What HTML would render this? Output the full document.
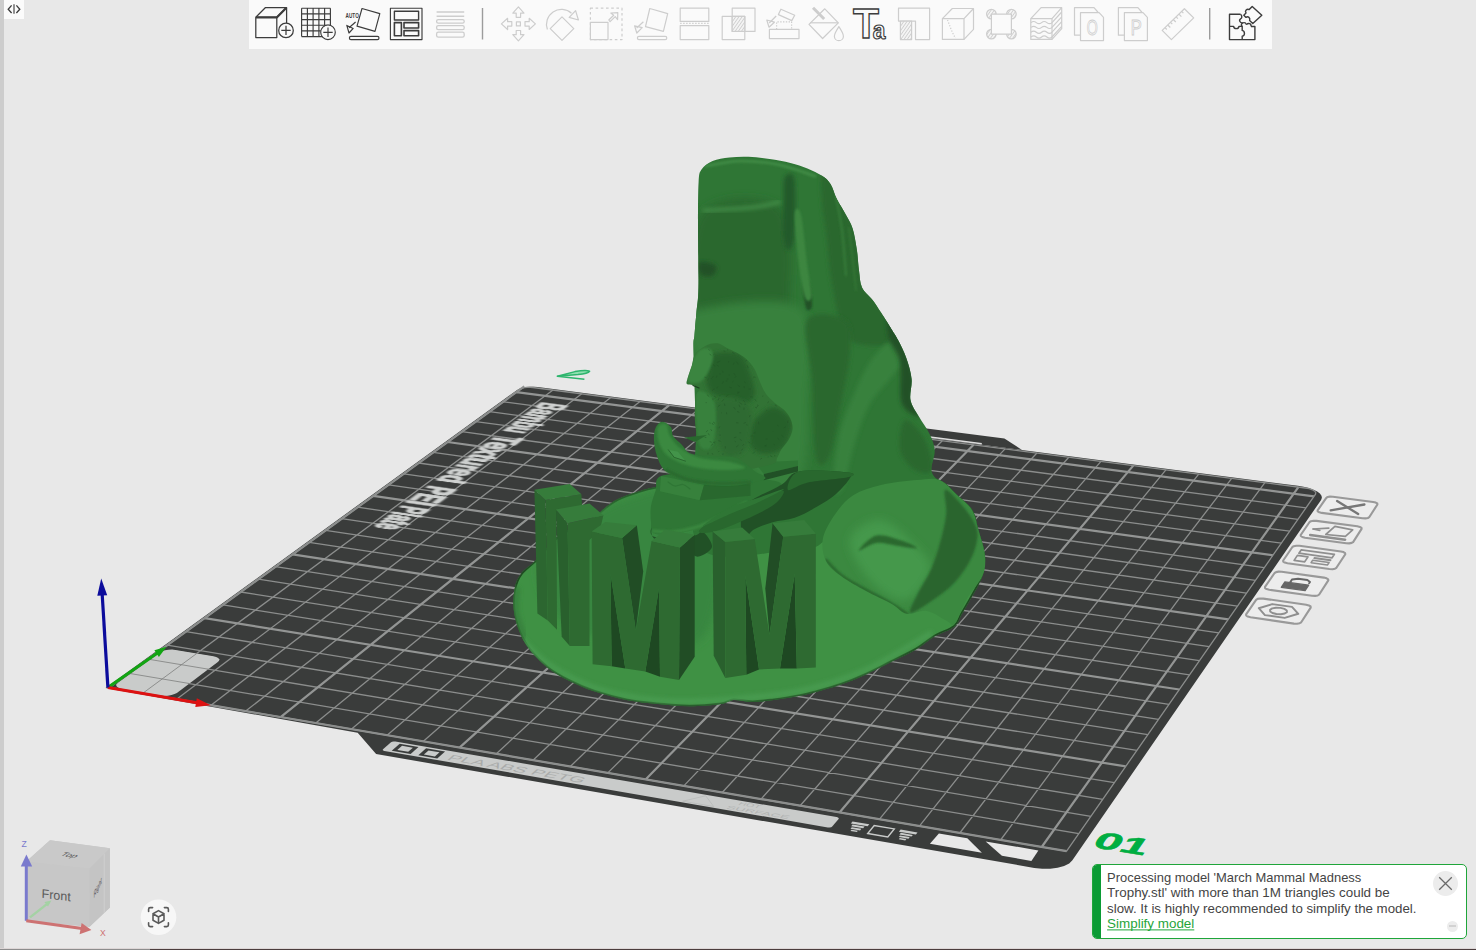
<!DOCTYPE html>
<html><head><meta charset="utf-8"><title>Bambu Studio</title>
<style>
html,body{margin:0;padding:0}
body{width:1476px;height:950px;overflow:hidden;position:relative;background:#e8e8e8;font-family:"Liberation Sans",sans-serif}
svg{position:absolute;left:0;top:0}
</style></head><body>
<svg width="1476" height="950" viewBox="0 0 1476 950">
<g id="plate">
<polygon points="105.5,687.9 357.7,732.8 376.1,754.0 1034.3,867.9 1042.2,868.8 1050.2,868.7 1057.6,867.8 1064.1,865.9 1069.2,863.4 1072.4,860.3 1321.1,499.9 1321.9,497.8 1321.5,495.7 1319.9,493.5 1317.2,491.5 1313.5,489.7 1308.9,488.1 1303.6,486.8 1297.9,485.8 537.9,387.0 534.0,386.7 529.9,386.7 525.9,387.1 522.3,387.8 519.2,388.7 517.1,389.9" fill="#3a3c3b"/>
<polygon points="792.9,420.1 825.7,415.6 1004.4,438.6 1022.0,449.9" fill="#3a3c3b"/>
<path d="M833.3,424.4L981.8,443.7" stroke="#dcdcdc" stroke-width="1.5"/>
<polygon points="383.0,749.2 382.7,749.9 383.2,750.5 384.4,750.9 827.8,827.4 829.6,827.5 831.2,827.2 832.2,826.6 838.6,819.0 838.8,818.2 838.0,817.5 836.6,817.1 395.3,741.5 393.7,741.4 392.1,741.7 391.0,742.3" fill="#c9cbca"/>
<polygon points="938.9,833.4 967.3,838.3 981.9,852.8 929.9,843.8" fill="#e8e8e8"/>
<polygon points="985.7,841.4 1038.4,850.4 1031.4,860.9 1001.9,855.8" fill="#e8e8e8"/>
<polygon points="117.9,682.8 116.5,684.3 116.3,685.7 117.2,687.1 119.2,688.2 122.0,688.9 160.7,695.5 164.2,695.9 167.9,695.7 171.5,695.1 174.5,694.1 176.9,692.9 217.8,662.1 219.1,660.7 219.2,659.3 218.2,658.0 216.2,656.9 213.4,656.2 175.4,649.9 172.1,649.6 168.5,649.8 165.0,650.3 162.0,651.3 159.7,652.5" fill="#c9cbca"/>
<path d="M142.5,693.5L553.0,390.1M128.6,673.3L1078.9,833.6M176.6,699.3L581.8,393.8M148.1,659.1L1090.9,816.3M211.0,705.2L610.8,397.6M167.3,645.2L1102.8,799.3M245.7,711.1L640.0,401.4M186.1,631.6L1114.4,782.7M315.8,723.1L698.9,409.1M222.9,604.9L1136.9,750.4M351.3,729.2L728.7,412.9M240.7,592.0L1147.8,734.7M387.1,735.3L758.6,416.8M258.3,579.2L1158.5,719.4M423.1,741.4L788.7,420.8M275.5,566.7L1169.0,704.3M496.1,753.9L849.6,428.7M309.2,542.3L1189.5,674.9M533.0,760.2L880.3,432.7M325.6,530.4L1199.4,660.7M570.3,766.5L911.2,436.7M341.7,518.7L1209.2,646.7M607.8,772.9L942.3,440.7M357.6,507.2L1218.8,632.9M683.8,785.9L1005.1,448.9M388.6,484.8L1237.4,606.1M722.2,792.5L1036.9,453.0M403.7,473.8L1246.5,593.1M761.0,799.1L1068.8,457.2M418.6,463.0L1255.5,580.3M800.1,805.8L1101.0,461.4M433.2,452.4L1264.2,567.7M879.3,819.3L1165.9,469.8M461.8,431.7L1281.4,543.1M919.4,826.1L1198.7,474.1M475.8,421.6L1289.7,531.2M959.8,833.0L1231.7,478.4M489.5,411.6L1297.9,519.4M1000.6,840.0L1264.9,482.7M503.1,401.8L1306.0,507.8" stroke="#8b8d8c" stroke-width="1.3" fill="none"/>
<path d="M108.7,687.7L524.3,386.4M108.7,687.7L1066.6,851.2M280.6,717.1L669.3,405.2M204.7,618.1L1125.7,766.4M459.5,747.6L819.0,424.7M292.5,554.4L1179.3,689.5M645.6,779.4L973.6,444.8M373.2,495.9L1228.2,619.4M839.5,812.5L1133.3,465.6M447.6,442.0L1272.9,555.3M1041.7,847.0L1298.4,487.1M516.4,392.1L1313.9,496.4" stroke="#939594" stroke-width="2.2" fill="none"/>
<polygon points="108.7,687.7 108.7,687.7 108.7,687.7 108.7,687.7 108.7,687.7 108.7,687.7 1066.5,851.2 1066.5,851.2 1066.6,851.2 1066.6,851.2 1066.6,851.2 1066.6,851.2 1315.5,494.2 1315.8,492.7 1314.7,491.2 1312.4,489.8 1309.1,488.7 1305.1,488.0 532.9,387.5 530.1,387.3 527.1,387.4 524.3,387.7 522.0,388.4 520.4,389.2" stroke="#8b8d8c" stroke-width="1.3" fill="none"/>
<polygon points="119.5,682.6 118.1,684.0 117.9,685.5 118.8,686.8 120.8,687.9 123.6,688.7 160.3,694.9 163.8,695.2 167.4,695.1 171.0,694.5 174.1,693.5 176.4,692.3 216.3,662.4 217.5,661.0 217.6,659.6 216.7,658.3 214.7,657.2 211.8,656.5 175.8,650.5 172.5,650.2 168.9,650.4 165.4,650.9 162.4,651.8 160.2,653.1" fill="#c9cbca"/>
<path d="M143.7,692.6L196.7,653.5M130.6,673.6L189.3,683.5M150.1,659.5L208.4,669.2" stroke="#7d7f7e" stroke-width="0.8" fill="none"/>
</g>
<g id="model">
<defs><filter id="b2" x="-20%" y="-20%" width="140%" height="140%"><feGaussianBlur stdDeviation="2"/></filter><filter id="b4" x="-20%" y="-20%" width="140%" height="140%"><feGaussianBlur stdDeviation="4"/></filter><filter id="b1" x="-20%" y="-20%" width="140%" height="140%"><feGaussianBlur stdDeviation="1"/></filter></defs>
<clipPath id="cbase"><path d="M536.0,560.0C529.5,566.5 524.5,569.0 521.0,573.7C517.5,578.4 515.9,582.4 514.7,588.4C513.5,594.4 513.0,602.5 513.7,609.5C514.4,616.5 516.4,623.8 519.0,630.5C521.6,637.2 524.6,643.2 529.5,649.5C534.4,655.8 541.7,663.1 548.4,668.4C555.1,673.6 561.8,677.1 569.5,681.0C577.2,684.9 585.2,688.4 594.7,691.6C604.2,694.8 615.8,697.9 626.3,700.0C636.8,702.1 647.5,703.0 658.0,704.0C668.5,705.0 679.0,706.3 689.5,706.3C700.0,706.3 713.6,705.0 721.0,704.0C728.4,703.0 728.4,700.3 733.7,700.0C739.0,699.7 745.9,702.0 752.6,702.0C759.3,702.0 765.8,701.0 773.7,700.0C781.6,699.0 793.0,697.1 800.0,695.8C807.0,694.5 809.0,693.9 815.8,692.0C822.6,690.1 832.6,687.4 841.0,684.5C849.4,681.6 857.6,678.2 866.0,674.4C874.4,670.6 883.0,666.0 891.5,661.8C900.0,657.6 909.6,653.2 916.8,649.0C923.9,644.8 928.1,640.4 934.4,636.6C940.7,632.9 950.0,630.3 954.6,626.5C959.2,622.7 959.0,618.9 962.0,613.8C965.0,608.7 968.9,602.3 972.3,596.0C975.7,589.7 980.3,582.7 982.4,576.0C984.5,569.3 985.6,563.4 985.0,555.8C984.4,548.2 980.7,538.1 978.6,530.5C976.5,522.9 975.9,515.9 972.3,510.0C968.7,504.1 962.5,500.0 957.0,495.0C951.5,490.0 949.0,484.2 939.5,480.0C930.0,475.8 923.2,471.7 900.0,470.0C876.8,468.3 833.3,468.3 800.0,470.0C766.7,471.7 724.0,477.2 700.0,480.0C676.0,482.8 666.5,485.0 656.0,487.0C645.5,489.0 643.3,490.0 637.0,492.0C630.7,494.0 623.2,496.5 618.0,499.0C612.8,501.5 610.7,503.5 606.0,507.0C601.3,510.5 597.7,515.3 590.0,520.0C582.3,524.7 569.0,528.3 560.0,535.0C551.0,541.7 542.5,553.5 536.0,560.0Z"/></clipPath>
<g clip-path="url(#cbase)">
<polygon points="500.0,450.0 1000.0,450.0 1000.0,720.0 500.0,720.0" fill="#3f9144" />
<path d="M536.0,560.0C533.5,562.3 524.5,569.0 521.0,573.7C517.5,578.4 515.9,582.4 514.7,588.4C513.5,594.4 513.0,602.5 513.7,609.5C514.4,616.5 516.4,623.8 519.0,630.5C521.6,637.2 524.6,643.2 529.5,649.5C534.4,655.8 541.7,663.1 548.4,668.4C555.1,673.6 561.8,677.1 569.5,681.0C577.2,684.9 585.2,688.4 594.7,691.6C604.2,694.8 615.8,697.9 626.3,700.0C636.8,702.1 647.5,703.0 658.0,704.0C668.5,705.0 679.0,706.3 689.5,706.3C700.0,706.3 713.6,705.0 721.0,704.0C728.4,703.0 728.4,700.3 733.7,700.0C739.0,699.7 745.9,702.0 752.6,702.0C759.3,702.0 765.8,701.0 773.7,700.0C781.6,699.0 793.0,697.1 800.0,695.8C807.0,694.5 809.0,693.9 815.8,692.0C822.6,690.1 832.6,687.4 841.0,684.5C849.4,681.6 857.6,678.2 866.0,674.4C874.4,670.6 883.0,666.0 891.5,661.8C900.0,657.6 909.6,653.2 916.8,649.0C923.9,644.8 928.1,640.4 934.4,636.6C940.7,632.9 950.0,630.3 954.6,626.5C959.2,622.7 959.0,618.9 962.0,613.8C965.0,608.7 968.9,602.3 972.3,596.0C975.7,589.7 980.3,582.7 982.4,576.0C984.5,569.3 985.6,563.4 985.0,555.8C984.4,548.2 980.7,538.1 978.6,530.5C976.5,522.9 975.9,515.9 972.3,510.0C968.7,504.1 962.5,500.0 957.0,495.0C951.5,490.0 949.0,484.2 939.5,480.0C930.0,475.8 923.2,471.7 900.0,470.0C876.8,468.3 833.3,468.3 800.0,470.0C766.7,471.7 724.0,477.2 700.0,480.0C676.0,482.8 666.5,485.0 656.0,487.0C645.5,489.0 643.3,490.0 637.0,492.0C630.7,494.0 623.2,496.5 618.0,499.0C612.8,501.5 610.7,503.5 606.0,507.0C601.3,510.5 597.7,515.3 590.0,520.0C582.3,524.7 569.0,528.3 560.0,535.0C551.0,541.7 540.0,555.8 536.0,560.0" fill="none" stroke="#1f4a22" stroke-width="3.2" stroke-linecap="round" stroke-linejoin="round" />
<path d="M522.0,640.0C526.3,644.0 535.8,656.0 548.0,664.0C560.2,672.0 576.7,681.9 595.0,688.0C613.3,694.1 637.0,698.5 658.0,700.5C679.0,702.5 697.3,701.6 721.0,700.0C744.7,698.4 775.8,696.0 800.0,691.0C824.2,686.0 844.3,679.5 866.0,670.0C887.7,660.5 919.3,640.0 930.0,634.0" fill="none" stroke="#4a9c51" stroke-width="5" stroke-linecap="round" stroke-linejoin="round"  filter="url(#b2)"/>
<path d="M517.0,590.0C516.8,593.7 514.8,604.3 516.0,612.0C517.2,619.7 522.7,632.0 524.0,636.0" fill="none" stroke="#37813c" stroke-width="6" stroke-linecap="round" stroke-linejoin="round"  filter="url(#b2)"/>
<path d="M540.0,560.0C546.7,541.7 580.0,522.0 600.0,510.0C620.0,498.0 643.3,493.0 660.0,488.0C676.7,483.0 690.0,468.0 700.0,480.0C710.0,492.0 720.0,533.3 720.0,560.0C720.0,586.7 716.7,626.7 700.0,640.0C683.3,653.3 643.3,643.3 620.0,640.0C596.7,636.7 573.3,633.3 560.0,620.0C546.7,606.7 533.3,578.3 540.0,560.0Z" fill="#398640"  filter="url(#b4)"/>
</g>
<clipPath id="crock"><path d="M693.5,352.0C693.2,336.2 694.0,341.7 694.5,335.0C695.0,328.3 695.8,320.0 696.5,312.0C697.2,304.0 698.2,301.7 698.5,287.0C698.8,272.3 698.0,241.5 698.0,224.0C698.0,206.5 698.0,191.1 698.6,182.0C699.2,172.9 699.2,173.0 701.5,169.5C703.8,166.0 707.9,163.0 712.6,161.0C717.3,159.0 723.5,158.2 729.5,157.5C735.5,156.8 741.7,156.6 748.4,156.8C755.1,157.1 762.5,158.0 769.5,159.0C776.5,160.0 784.2,161.4 790.5,163.0C796.8,164.6 802.1,166.3 807.4,168.4C812.6,170.5 818.1,173.2 822.0,175.8C825.9,178.4 828.0,180.1 830.5,184.0C833.0,187.9 834.3,194.1 836.8,199.0C839.3,203.9 842.7,208.8 845.3,213.7C847.9,218.6 850.7,222.4 852.6,228.4C854.5,234.4 855.7,242.5 856.8,249.5C857.9,256.5 858.1,264.2 859.0,270.5C859.9,276.8 859.7,282.5 862.0,287.4C864.3,292.3 869.4,295.8 872.6,300.0C875.8,304.2 877.8,307.7 881.0,312.6C884.2,317.5 888.8,324.9 891.6,329.5C894.4,334.1 895.5,335.3 898.0,340.0C900.5,344.7 904.0,351.4 906.3,357.9C908.6,364.4 910.9,372.0 911.6,379.0C912.3,386.0 909.3,393.7 910.5,400.0C911.7,406.3 915.8,411.2 919.0,416.8C922.2,422.4 926.9,428.1 929.5,433.7C932.1,439.3 934.4,444.2 934.7,450.5C935.1,456.8 930.4,466.0 931.6,471.6C932.8,477.2 938.9,480.6 942.0,484.0C945.1,487.4 952.0,489.3 950.0,492.0C948.0,494.7 941.7,498.7 930.0,500.0C918.3,501.3 895.0,496.7 880.0,500.0C865.0,503.3 849.5,513.0 840.0,520.0C830.5,527.0 829.7,537.3 823.0,542.0C816.3,546.7 820.5,547.0 800.0,548.0C779.5,549.0 717.3,567.7 700.0,548.0C682.7,528.3 697.1,462.7 696.0,430.0C694.9,397.3 693.8,367.8 693.5,352.0Z"/></clipPath>
<g clip-path="url(#crock)">
<polygon points="680.0,140.0 1000.0,140.0 1000.0,620.0 680.0,620.0" fill="#2f7635" />
<path d="M700.0,215.0C713.3,194.7 765.0,193.8 780.0,208.0C795.0,222.2 790.0,279.7 790.0,300.0C790.0,320.3 795.0,325.0 780.0,330.0C765.0,335.0 713.3,349.2 700.0,330.0C686.7,310.8 686.7,235.3 700.0,215.0Z" fill="#29682e"  filter="url(#b4)"/>
<path d="M700.0,262.0C702.7,260.7 714.0,263.7 716.0,266.0C718.0,268.3 714.7,274.7 712.0,276.0C709.3,277.3 702.0,276.3 700.0,274.0C698.0,271.7 697.3,263.3 700.0,262.0Z" fill="#215126"  filter="url(#b2)"/>
<path d="M690.0,312.0C708.3,305.8 780.3,293.3 800.0,308.0C819.7,322.7 808.0,371.3 808.0,400.0C808.0,428.7 808.0,466.7 800.0,480.0C792.0,493.3 778.3,502.5 760.0,480.0C741.7,457.5 701.7,373.0 690.0,345.0C678.3,317.0 671.7,318.2 690.0,312.0Z" fill="#37813c"  filter="url(#b4)"/>
<path d="M822.0,170.0C824.2,166.8 832.0,179.4 835.0,184.2C838.0,189.0 837.8,194.1 840.0,199.0C842.2,203.9 845.5,208.8 848.0,213.7C850.5,218.6 853.0,222.4 855.0,228.4C857.0,234.4 858.8,242.5 860.0,249.5C861.2,256.5 861.2,264.2 862.0,270.5C862.8,276.8 862.8,282.5 865.0,287.4C867.2,292.3 868.8,291.2 875.0,300.0C881.2,308.8 906.2,333.3 902.0,340.0C897.8,346.7 861.1,348.8 849.5,340.0C837.9,331.2 836.5,304.9 832.6,287.4C828.7,269.8 828.1,248.7 826.3,234.7C824.5,220.7 822.7,214.0 822.0,203.2C821.3,192.4 819.8,173.2 822.0,170.0Z" fill="#29682e"  filter="url(#b2)"/>
<path d="M784.5,177.9C786.2,173.3 791.7,171.6 793.5,175.8C795.3,180.0 795.5,192.3 795.5,203.2C795.5,214.1 794.9,233.3 793.5,241.0C792.1,248.7 788.8,250.9 787.0,249.5C785.2,248.1 783.6,240.3 783.0,232.6C782.4,224.9 783.2,212.3 783.5,203.2C783.8,194.1 782.8,182.5 784.5,177.9Z" fill="#245a29"  filter="url(#b2)"/>
<path d="M803.0,280.0C803.5,275.8 807.5,278.7 809.0,283.0C810.5,287.3 812.5,301.8 812.0,306.0C811.5,310.2 807.5,312.3 806.0,308.0C804.5,303.7 802.5,284.2 803.0,280.0Z" fill="#215126"  filter="url(#b1)"/>
<path d="M794.7,215.0C795.0,206.4 798.9,206.4 801.0,215.0C803.1,223.6 805.6,252.8 807.4,266.3C809.2,279.8 812.0,290.7 811.6,296.0C811.2,301.3 807.4,302.9 805.3,298.0C803.2,293.1 800.8,280.1 799.0,266.3C797.2,252.5 794.4,223.6 794.7,215.0Z" fill="#3c8641"  filter="url(#b1)"/>
<path d="M704.0,210.5C710.0,210.2 730.3,209.2 740.0,208.5C749.7,207.8 755.5,207.1 762.0,206.0C768.5,204.9 776.2,202.7 779.0,202.0" fill="none" stroke="#44904a" stroke-width="3.4" stroke-linecap="round" stroke-linejoin="round"  filter="url(#b2)"/>
<path d="M706.0,166.0C711.7,165.2 728.0,161.2 740.0,161.0C752.0,160.8 765.5,162.0 778.0,164.5C790.5,167.0 808.8,174.1 815.0,176.0" fill="none" stroke="#3f8a44" stroke-width="3" stroke-linecap="round" stroke-linejoin="round"  filter="url(#b1)"/>
<path d="M836.0,196.0C837.0,201.7 840.3,216.8 842.0,230.0C843.7,243.2 845.3,267.5 846.0,275.0" fill="none" stroke="#357838" stroke-width="2.5" stroke-linecap="round" stroke-linejoin="round"  filter="url(#b1)"/>
<path d="M849.0,228.0C849.7,233.7 851.8,251.7 853.0,262.0C854.2,272.3 855.5,285.3 856.0,290.0" fill="none" stroke="#337436" stroke-width="2" stroke-linecap="round" stroke-linejoin="round"  filter="url(#b1)"/>
<path d="M807.0,320.0C812.5,310.2 837.8,314.7 845.0,320.0C852.2,325.3 850.7,338.0 850.0,352.0C849.3,366.0 844.5,386.5 841.0,404.0C837.5,421.5 833.2,448.2 829.0,457.0C824.8,465.8 818.8,470.0 816.0,457.0C813.2,444.0 813.5,401.8 812.0,379.0C810.5,356.2 801.5,329.8 807.0,320.0Z" fill="#29682e"  filter="url(#b2)"/>
<path d="M870.0,362.0C876.3,353.2 886.7,341.0 892.0,341.0C897.3,341.0 905.7,351.5 902.0,362.0C898.3,372.5 878.0,390.0 870.0,404.0C862.0,418.0 858.5,432.0 854.0,446.0C849.5,460.0 846.5,481.0 843.0,488.0C839.5,495.0 833.7,496.7 833.0,488.0C832.3,479.3 835.5,451.7 839.0,436.0C842.5,420.3 848.8,406.3 854.0,394.0C859.2,381.7 863.7,370.8 870.0,362.0Z" fill="#37813c"  filter="url(#b2)"/>
<path d="M888.0,318.0C889.8,317.7 896.5,330.3 900.0,337.0C903.5,343.7 906.7,351.0 909.0,358.0C911.3,365.0 913.3,372.0 914.0,379.0C914.7,386.0 911.8,393.7 913.0,400.0C914.2,406.3 922.8,416.3 921.0,417.0C919.2,417.7 905.5,413.2 902.0,404.0C898.5,394.8 902.2,372.8 900.0,362.0C897.8,351.2 891.0,346.3 889.0,339.0C887.0,331.7 886.2,318.3 888.0,318.0Z" fill="#215126"  filter="url(#b2)"/>
<path d="M905.0,420.0C909.2,418.3 920.5,431.7 925.0,440.0C929.5,448.3 933.7,465.0 932.0,470.0C930.3,475.0 920.3,473.3 915.0,470.0C909.7,466.7 901.7,458.3 900.0,450.0C898.3,441.7 900.8,421.7 905.0,420.0Z" fill="#29682e"  filter="url(#b2)"/>
</g>
<clipPath id="cboul"><path d="M823.0,538.0C824.7,530.0 830.9,520.2 836.0,513.0C841.1,505.8 846.1,499.7 853.6,495.0C861.1,490.3 870.4,487.5 881.0,485.0C891.6,482.5 907.2,480.8 917.0,480.0C926.8,479.2 932.8,477.5 939.5,480.0C946.2,482.5 951.6,490.0 957.0,495.0C962.4,500.0 968.4,504.1 972.0,510.0C975.6,515.9 976.4,522.8 978.6,530.5C980.8,538.2 984.4,548.4 985.0,556.0C985.6,563.6 985.4,568.9 982.4,576.0C979.4,583.1 971.6,590.7 967.0,598.7C962.4,606.7 957.9,620.3 954.6,624.0C951.3,627.7 951.6,623.2 947.0,621.0C942.4,618.8 933.7,612.2 927.0,611.0C920.3,609.8 912.6,615.0 906.7,613.8C900.8,612.6 898.3,607.5 891.5,603.7C884.7,599.9 874.4,595.6 866.0,591.0C857.6,586.4 847.7,581.0 841.0,576.0C834.3,571.0 829.0,567.3 826.0,561.0C823.0,554.7 821.3,546.0 823.0,538.0Z"/></clipPath>
<g clip-path="url(#cboul)">
<polygon points="800.0,470.0 1000.0,470.0 1000.0,640.0 800.0,640.0" fill="#3b8940" />
<path d="M850.0,540.0C851.7,530.0 869.2,519.2 880.0,520.0C890.8,520.8 906.7,536.7 915.0,545.0C923.3,553.3 931.7,560.8 930.0,570.0C928.3,579.2 915.0,598.3 905.0,600.0C895.0,601.7 879.2,590.0 870.0,580.0C860.8,570.0 848.3,550.0 850.0,540.0Z" fill="#45984c"  filter="url(#b4)"/>
<path d="M945.0,490.0C947.1,488.1 954.4,496.7 959.0,501.7C963.6,506.7 969.8,514.4 972.9,520.2C976.0,526.0 977.9,529.8 977.5,536.4C977.1,543.0 974.5,551.9 970.6,559.6C966.8,567.3 961.0,575.8 954.4,582.8C947.8,589.8 938.6,596.3 931.2,601.3C923.9,606.3 912.6,614.0 910.3,612.9C908.0,611.8 913.8,601.7 917.3,594.4C920.8,587.1 927.3,577.8 931.2,568.9C935.1,560.0 938.0,550.3 940.5,541.0C943.0,531.7 945.5,521.8 946.2,513.3C947.0,504.8 942.9,491.9 945.0,490.0Z" fill="#2a652e"  filter="url(#b1)"/>
<path d="M858.7,550.7C858.7,549.5 869.2,537.3 876.4,535.6C883.5,533.9 894.9,538.5 901.6,540.6C908.3,542.7 917.6,547.4 916.8,548.2C916.0,549.1 903.3,546.6 896.6,545.7C889.9,544.8 882.7,542.2 876.4,543.0C870.1,543.8 858.7,551.9 858.7,550.7Z" fill="#29682e"  filter="url(#b1)"/>
<path d="M826.0,560.0C829.2,563.0 834.3,570.8 845.0,578.0C855.7,585.2 879.7,597.0 890.0,603.0C900.3,609.0 904.2,612.2 907.0,614.0" fill="none" stroke="#29682e" stroke-width="3" stroke-linecap="round" stroke-linejoin="round"  filter="url(#b1)"/>
</g>
<path d="M655.5,491.0C653.8,496.0 651.8,500.8 651.0,506.0C650.2,511.2 650.6,517.8 651.0,522.3C651.4,526.8 649.8,531.3 653.3,533.3C656.8,535.2 665.0,534.6 672.0,534.0C679.0,533.4 688.4,531.5 695.2,529.5C702.0,527.5 704.4,526.4 712.9,522.3C721.4,518.1 734.7,510.9 746.1,504.6C757.5,498.3 780.4,489.1 781.4,484.7C782.4,480.3 765.6,479.8 752.0,478.0C738.4,476.2 715.2,474.3 700.0,474.0C684.8,473.7 668.4,473.2 661.0,476.0C653.6,478.8 657.2,486.0 655.5,491.0Z" fill="#2f7635" />
<path d="M653.0,531.0C656.2,531.2 665.0,532.6 672.0,532.0C679.0,531.4 688.4,529.5 695.2,527.5C702.0,525.5 704.4,524.4 712.9,520.3C721.4,516.1 740.6,505.6 746.1,502.6" fill="none" stroke="#3b8940" stroke-width="3" stroke-linecap="round" stroke-linejoin="round"  filter="url(#b1)"/>
<path d="M651.5,528.0C651.3,527.6 648.1,535.7 655.0,537.0C661.9,538.3 684.6,536.8 692.6,536.0C700.6,535.2 699.8,530.2 703.0,532.0C706.2,533.8 712.7,542.9 712.0,547.0C711.3,551.1 702.5,555.7 699.0,556.5C695.5,557.3 692.5,554.6 691.0,552.0C689.5,549.4 695.8,543.1 690.0,541.0C684.2,538.9 662.4,541.7 656.0,539.5C649.6,537.3 651.7,528.4 651.5,528.0Z" fill="#215126" />
<path d="M746.1,504.6C752.8,497.4 772.6,490.2 781.4,484.7C790.2,479.2 788.0,473.4 799.1,471.4C810.2,469.4 839.5,471.4 848.0,472.5C856.5,473.6 852.0,474.4 850.0,478.0C848.0,481.6 841.5,489.2 836.0,494.0C830.5,498.8 823.7,502.8 816.8,506.8C809.9,510.8 802.1,515.2 794.7,517.8C787.3,520.4 779.2,520.4 772.6,522.3C766.0,524.1 759.2,526.8 754.9,528.9C750.6,531.0 749.3,535.1 747.0,535.0C744.7,534.9 741.1,533.1 741.0,528.0C740.9,522.9 739.4,511.8 746.1,504.6Z" fill="#215126" />
<path d="M799.1,471.4C809.1,468.5 839.7,471.6 848.0,472.5C856.3,473.4 855.7,475.3 849.0,477.0C842.3,478.7 818.2,480.3 808.0,482.5C797.8,484.7 789.5,491.9 788.0,490.0C786.5,488.1 789.1,474.3 799.1,471.4Z" fill="#29682e" />
<path d="M701.0,528.4C705.2,524.5 718.9,514.4 728.4,509.5C737.9,504.6 748.8,502.2 757.9,499.0C767.0,495.8 780.0,489.8 783.0,490.5C786.0,491.2 780.9,498.8 776.0,503.0C771.1,507.2 762.4,511.6 753.7,515.8C745.0,520.0 732.5,525.5 724.0,528.4C715.5,531.3 706.8,533.0 703.0,533.0C699.2,533.0 696.8,532.3 701.0,528.4Z" fill="#29682e" />
<path d="M703.0,526.0C702.7,525.1 719.2,513.2 728.4,508.5C737.5,503.8 748.6,501.2 757.9,498.0C767.2,494.8 783.6,488.4 784.0,489.0C784.4,489.6 769.0,497.3 760.0,501.5C751.0,505.7 739.5,509.9 730.0,514.0C720.5,518.1 703.3,526.9 703.0,526.0Z" fill="#2f7635" />
<polygon points="661.0,475.9 704.0,470.0 750.5,480.0 750.5,495.7 699.7,500.2 659.9,491.3" fill="#2f7635" />
<polygon points="661.0,475.9 704.1,484.7 699.7,500.2 659.9,491.3" fill="#37813c" />
<polygon points="704.1,484.7 750.5,482.5 750.5,495.7 699.7,500.2" fill="#29682e" />
<path d="M668.0,482.0C669.2,482.7 672.5,485.6 675.0,486.0C677.5,486.4 680.5,484.0 683.0,484.5C685.5,485.0 688.8,488.2 690.0,489.0" fill="none" stroke="#2f7635" stroke-width="1.2" stroke-linecap="round" stroke-linejoin="round" />
<polygon points="754.9,462.6 798.0,460.4 798.0,466.0 763.8,474.0" fill="#2f7635" />
<polygon points="763.8,474.0 798.0,466.0 798.0,471.4 763.8,480.3" fill="#215126" />
<clipPath id="cbear"><path d="M695.2,354.3C697.6,351.0 702.6,347.3 706.3,345.5C710.0,343.7 713.6,342.8 717.3,343.3C721.0,343.9 724.7,347.0 728.4,348.8C732.1,350.6 736.1,352.3 739.4,354.3C742.7,356.3 745.7,358.3 748.3,360.9C750.9,363.5 752.9,366.1 754.9,369.8C756.9,373.5 758.5,378.9 760.4,383.0C762.2,387.1 763.6,390.8 766.0,394.1C768.4,397.4 771.9,400.3 774.8,402.9C777.7,405.5 781.0,407.0 783.6,409.6C786.2,412.2 788.8,415.1 790.3,418.4C791.8,421.7 792.9,425.7 792.5,429.4C792.1,433.1 790.0,437.2 788.1,440.5C786.2,443.8 783.2,446.4 781.4,449.3C779.5,452.2 778.5,455.8 777.0,458.2C775.5,460.6 778.8,462.0 772.6,464.0C766.4,466.0 751.3,469.7 740.0,470.0C728.7,470.3 712.0,469.8 705.0,466.0C698.0,462.2 699.3,452.5 697.9,447.1C696.5,441.8 696.9,438.7 696.4,433.9C695.9,429.1 695.0,423.6 694.8,418.4C694.6,413.2 694.9,406.9 695.2,402.9C695.5,398.8 695.6,396.5 696.4,394.1C697.1,391.7 700.3,390.1 699.7,388.6C699.1,387.1 695.1,385.9 693.0,385.2C690.9,384.4 687.8,385.2 686.9,384.1C686.0,383.0 686.7,381.7 687.5,378.6C688.3,375.5 690.6,369.4 691.9,365.4C693.2,361.3 692.8,357.6 695.2,354.3Z"/></clipPath><g clip-path="url(#cbear)">
<polygon points="680.0,340.0 800.0,340.0 800.0,475.0 680.0,475.0" fill="#327335" />
<path d="M712.9,354.3C718.0,351.7 733.1,351.0 739.4,354.3C745.7,357.6 747.9,367.6 750.5,374.2C753.1,380.8 755.6,389.3 754.9,394.1C754.2,398.9 750.5,402.2 746.1,402.9C741.7,403.6 733.9,400.0 728.4,398.5C722.9,397.0 716.6,396.7 712.9,394.1C709.2,391.5 707.0,387.1 706.3,383.0C705.6,378.9 707.4,374.6 708.5,369.8C709.6,365.0 707.8,356.9 712.9,354.3Z" fill="#27602b"  filter="url(#b2)"/>
<path d="M752.7,422.8C756.4,416.5 766.3,408.0 772.6,407.3C778.9,406.6 787.3,414.0 790.3,418.4C793.2,422.8 791.8,428.8 790.3,433.9C788.8,439.0 785.8,446.0 781.4,449.3C777.0,452.6 768.9,454.5 763.8,453.8C758.6,453.1 752.4,450.1 750.5,444.9C748.6,439.7 749.0,429.1 752.7,422.8Z" fill="#27602b"  filter="url(#b2)"/>
<path d="M718.0,400.0C722.8,395.3 739.3,398.7 745.0,402.0C750.7,405.3 752.0,412.0 752.0,420.0C752.0,428.0 749.5,444.2 745.0,450.0C740.5,455.8 729.8,458.3 725.0,455.0C720.2,451.7 717.2,439.2 716.0,430.0C714.8,420.8 713.2,404.7 718.0,400.0Z" fill="#2e6b31"  filter="url(#b2)"/>
<path d="M697.0,392.0C699.7,388.7 708.8,393.7 712.0,398.0C715.2,402.3 716.0,410.0 716.0,418.0C716.0,426.0 714.7,441.3 712.0,446.0C709.3,450.7 702.7,450.7 700.0,446.0C697.3,441.3 696.5,427.0 696.0,418.0C695.5,409.0 694.3,395.3 697.0,392.0Z" fill="#37813c"  filter="url(#b1)"/>
<path d="M692.0,362.0C694.0,356.8 697.0,352.2 700.0,350.0C703.0,347.8 707.8,347.7 710.0,349.0C712.2,350.3 713.3,354.2 713.0,358.0C712.7,361.8 710.2,368.0 708.0,372.0C705.8,376.0 703.3,380.5 700.0,382.0C696.7,383.5 689.3,384.3 688.0,381.0C686.7,377.7 690.0,367.2 692.0,362.0Z" fill="#3a8540"  filter="url(#b1)"/>
<path d="M733.2,364.9l0.8,-2.1M751.0,389.0l-2.2,0.0M709.1,396.6l-2.2,-2.0M741.7,440.6l-1.9,-1.4M758.7,454.1l0.4,-0.5M788.0,353.2l1.8,-1.1M718.1,361.2l-1.0,1.6M721.2,413.1l0.7,-0.6M752.0,355.0l-2.2,-1.5M763.2,395.9l-0.9,0.4M744.1,381.6l1.5,1.0M726.5,412.3l0.1,1.9M767.3,380.2l2.4,-1.9M741.1,432.8l-1.7,-0.1M709.3,422.8l1.3,0.4M779.5,383.1l1.0,0.5M754.7,399.1l1.7,2.2M745.8,422.4l-2.2,1.0M760.4,459.2l1.6,-1.1M738.4,422.9l-2.4,-0.2M720.1,361.1l-2.2,1.3M716.9,375.7l-0.5,1.9M712.8,398.3l0.2,1.9M774.8,444.8l-1.1,-0.4M736.1,447.0l2.3,-1.7M720.8,374.0l-1.3,-0.1M755.5,377.4l-2.5,-0.4M737.0,411.4l2.3,1.0M749.3,417.2l0.9,-2.2M781.6,435.4l1.9,1.5M739.0,392.7l-2.0,0.7M711.2,355.5l-1.5,-1.7M734.6,353.9l-2.5,-1.7M714.5,388.7l-2.4,1.9M757.6,364.6l-1.2,-0.8M736.6,361.8l1.7,2.5M745.1,402.2l-2.1,-2.0M734.8,377.7l1.6,-1.7M707.9,454.5l0.1,-1.8M751.6,351.0l0.1,2.4M778.5,426.0l-1.2,-0.7M720.0,434.5l0.2,1.4M733.7,373.0l1.6,2.4M777.6,438.3l1.6,1.2M725.0,406.0l-0.7,-2.4M708.3,379.3l-1.2,1.0M786.3,398.1l2.2,2.4M786.2,388.8l-1.4,-1.4M722.5,370.9l0.6,2.0M776.6,401.7l0.8,1.5M713.1,422.0l2.0,1.4M769.0,401.5l-1.6,1.4M733.9,437.7l2.4,-0.5M739.7,454.0l1.1,-1.6M716.7,364.9l2.0,1.5M718.3,440.6l2.4,0.8M735.4,409.4l-1.8,-2.4M787.6,420.8l0.1,2.2M742.4,445.6l1.6,-1.4M727.2,380.8l-1.3,0.4M727.8,394.9l-1.8,2.1M735.7,399.3l0.4,2.0M741.3,450.8l0.0,0.2M750.0,350.1l-0.3,-1.6M706.3,437.5l-1.6,-0.1M766.9,410.3l-0.9,0.1M752.7,435.8l-2.0,0.3M726.9,379.0l1.4,0.0M753.2,433.1l2.1,-0.3M757.5,404.6l0.1,1.0M744.0,407.7l-0.1,2.2M764.7,446.2l2.2,-1.2M753.0,453.6l1.7,-1.8M716.2,397.5l-2.1,-1.3M712.1,423.0l1.4,2.0M719.0,428.2l0.8,-1.8M780.2,456.4l-1.4,2.3M739.5,402.6l2.4,1.7M719.6,396.3l0.1,-0.8M722.4,383.7l1.1,-2.4M752.5,397.3l-2.4,-0.8M758.4,405.4l-2.2,2.4M772.2,456.8l-2.0,-1.2M709.3,435.2l-1.1,-1.9M741.5,450.1l1.6,-1.2M718.5,450.9l0.4,1.0M713.5,354.4l0.9,-0.4M712.1,453.1l0.7,1.5M713.0,443.9l-2.2,1.8M744.1,386.0l0.3,2.1M728.5,362.5l0.1,-1.3M715.2,366.1l-2.2,-1.5M732.2,382.2l1.3,-1.1M748.0,367.9l-0.8,-2.4M727.0,349.7l1.2,0.3M721.9,401.2l2.2,-2.0M774.8,396.4l-0.0,1.7M739.0,404.7l0.9,2.4M734.8,441.2l1.0,0.7M740.0,386.9l-2.2,-1.9M711.9,431.0l-1.2,-1.7M713.1,442.2l1.9,0.9M729.7,375.1l-1.0,-0.2M719.2,397.9l-1.2,2.3M787.7,409.3l-1.3,2.3M732.0,387.9l-2.5,-0.6M745.9,404.3l-1.5,0.0M706.4,377.6l-2.1,-0.5M709.5,350.5l-1.0,-1.3M755.2,407.3l1.3,0.8M766.1,446.5l-0.6,-0.9M788.7,364.7l1.1,0.7M709.7,441.6l2.0,0.6M767.6,439.0l-1.8,0.1M748.4,441.5l1.5,1.6M755.1,448.0l0.9,1.0M725.3,351.5l-1.8,-0.7M714.8,441.6l0.3,0.6M758.6,424.2l-0.1,-2.5M773.0,431.8l0.0,0.2M761.4,355.4l1.2,-1.2M712.3,377.7l1.1,-1.5M768.1,457.3l-0.0,-0.6M746.2,424.6l1.3,0.6M760.0,356.7l-1.8,-1.2M768.4,382.1l0.3,-2.4M711.1,378.1l0.9,1.0M762.8,380.6l0.1,-0.2M745.2,361.3l2.0,-1.5M788.2,452.9l-2.4,-0.2M774.9,456.4l-0.3,-1.2M723.6,453.9l-1.4,0.4M717.9,406.7l2.3,-1.8M774.9,405.0l1.9,1.0M725.4,448.5l-0.1,-2.4M706.3,403.1l-0.2,-1.0M717.8,386.5l-0.9,1.7M706.1,432.1l1.7,-1.9M783.8,427.9l2.0,-1.1M737.3,392.0l2.5,0.4" stroke="#215126" stroke-width="1" fill="none" opacity="0.45"/>
</g>
<path d="M693.0,385.5C694.0,385.9 698.0,387.6 699.0,388.0" fill="none" stroke="#1a3f1d" stroke-width="1.2" stroke-linecap="round" stroke-linejoin="round" />
<path d="M662.1,421.7C664.7,421.6 669.2,424.8 671.0,427.2C672.8,429.6 671.3,433.2 673.1,436.1C674.9,439.1 679.0,441.9 682.0,444.9C685.0,447.8 685.6,451.9 690.8,453.8C695.9,455.7 705.9,455.4 712.9,456.0C719.9,456.6 727.6,456.0 732.8,457.1C738.0,458.2 740.2,460.2 743.9,462.6C747.6,465.0 751.6,469.2 754.9,471.4C758.2,473.6 762.3,474.5 763.8,475.9C765.3,477.2 766.8,478.1 763.8,479.5C760.8,480.9 752.0,482.9 746.0,484.0C740.0,485.1 734.7,485.9 728.0,486.0C721.3,486.1 713.3,485.5 706.0,484.5C698.7,483.5 690.8,482.3 684.0,480.0C677.2,477.7 669.5,474.5 665.0,470.5C660.5,466.5 658.8,461.0 657.0,456.0C655.2,451.0 654.2,445.2 654.0,440.5C653.8,435.8 654.1,431.1 655.5,428.0C656.9,424.9 659.5,421.8 662.1,421.7Z" fill="#2f7635" />
<path d="M658.0,427.0C659.2,424.0 664.0,422.5 666.0,424.0C668.0,425.5 667.7,432.0 670.0,436.0C672.3,440.0 675.0,444.3 680.0,448.0C685.0,451.7 691.7,455.7 700.0,458.0C708.3,460.3 722.5,460.3 730.0,462.0C737.5,463.7 746.7,466.7 745.0,468.0C743.3,469.3 729.2,470.3 720.0,470.0C710.8,469.7 698.7,468.3 690.0,466.0C681.3,463.7 673.2,460.0 668.0,456.0C662.8,452.0 660.7,446.8 659.0,442.0C657.3,437.2 656.8,430.0 658.0,427.0Z" fill="#3b8940"  filter="url(#b1)"/>
<path d="M666.0,470.0C669.7,471.6 679.0,477.2 688.0,479.5C697.0,481.8 709.7,483.1 720.0,483.5C730.3,483.9 745.0,482.2 750.0,482.0" fill="none" stroke="#29682e" stroke-width="2.5" stroke-linecap="round" stroke-linejoin="round"  filter="url(#b1)"/>
<polygon points="684.0,437.5 707.0,435.0 695.0,442.0" fill="#29682e" />
<polygon points="668.4,449.8 677.9,451.7 685.5,461.1 674.1,457.3" fill="#43944a" />
<path d="M668.4,449.8 L674.1,457.3 L685.5,461.1" fill="none" stroke="#29682e" stroke-width="1" stroke-linecap="round" stroke-linejoin="round" />
<polygon points="610.5,573.7 611.6,666.3 625.3,668.4" fill="#1e4822" />
<polygon points="659.0,588.4 645.3,671.6 660.0,676.8" fill="#1e4822" />
<polygon points="745.3,575.8 746.3,674.7 759.0,669.5" fill="#1e4822" />
<polygon points="794.7,573.7 780.0,668.4 796.8,668.4" fill="#1e4822" />
<polygon points="534.4,489.7 545.5,500.1 547.8,620.5 537.4,613.6" fill="#2c6630" />
<polygon points="545.5,500.1 581.4,494.3 582.0,506.0 556.5,511.0 557.0,629.8 547.8,620.5" fill="#2e6a31" />
<polygon points="534.4,489.7 569.8,483.9 581.4,494.3 545.5,500.1" fill="#367c3b" />
<polygon points="555.9,509.4 567.5,523.3 569.8,646.0 561.7,636.7" fill="#29602d" />
<polygon points="567.5,523.3 603.4,515.2 600.0,530.0 589.5,540.0 589.5,646.0 569.8,646.0" fill="#2e6a31" />
<polygon points="555.9,509.4 589.5,503.6 603.4,515.2 567.5,523.3" fill="#367c3b" />
<polygon points="680.0,547.4 694.7,534.7 694.7,656.8 679.0,680.0" fill="#214d25" />
<polygon points="622.1,537.9 636.8,525.3 643.2,571.6 635.8,630.5" fill="#214d25" />
<polygon points="591.6,531.6 622.1,537.9 635.8,630.5 651.6,541.0 680.0,547.4 679.0,680.0 660.0,676.8 659.0,588.4 645.3,671.6 625.3,668.4 610.5,573.7 611.6,666.3 592.6,664.2" fill="#2e6a31" />
<polygon points="591.6,531.6 605.3,522.1 636.8,525.3 622.1,537.9" fill="#367c3b" />
<polygon points="651.6,541.0 665.3,529.5 694.7,534.7 680.0,547.4" fill="#367c3b" />
<polygon points="712.6,531.6 725.3,542.1 725.3,677.9 713.7,655.8" fill="#29602d" />
<polygon points="772.6,523.2 783.2,536.8 769.5,634.7 765.3,588.4" fill="#214d25" />
<polygon points="725.3,542.1 754.7,539.0 769.5,634.7 783.2,536.8 815.8,533.7 815.8,667.4 796.8,668.4 794.7,573.7 780.0,668.4 759.0,669.5 745.3,575.8 746.3,674.7 725.3,677.9" fill="#2e6a31" />
<polygon points="712.6,531.6 742.1,527.4 754.7,539.0 725.3,542.1" fill="#367c3b" />
<polygon points="772.6,523.2 804.2,520.0 815.8,533.7 783.2,536.8" fill="#367c3b" />
</g>
<g id="overlay">
<line x1="107.9" y1="687.4" x2="157.5" y2="653.1" stroke="#12a512" stroke-width="3.0"/>
<polygon points="166.5,646.8 158.9,656.9 154.4,650.3" fill="#12a512"/>
<line x1="107.9" y1="687.4" x2="197.0" y2="702.8" stroke="#dd1111" stroke-width="3.0"/>
<polygon points="210.8,705.2 195.3,707.1 196.8,698.2" fill="#dd1111"/>
<line x1="107.9" y1="687.4" x2="102.2" y2="594.5" stroke="#0c0c9c" stroke-width="3.2"/>
<polygon points="101.2,578.5 107.2,595.2 97.3,595.8" fill="#0c0c9c"/>
<defs><filter id="tb" x="-10%" y="-30%" width="120%" height="160%"><feGaussianBlur stdDeviation="0.35"/></filter></defs>
<text transform="matrix(-1.3148 0.9751 -2.8967 -0.3811 542.44 401.90)" font-family="Liberation Sans, sans-serif" font-weight="bold" font-size="12.40" fill="#cfd1d0" text-anchor="start" opacity="1" textLength="30" lengthAdjust="spacingAndGlyphs" filter="url(#tb)" stroke="#cfd1d0" stroke-width="0.75">Bambu</text>
<text transform="matrix(-1.3837 1.0261 -2.9571 -0.4016 497.66 435.10)" font-family="Liberation Sans, sans-serif" font-weight="bold" font-size="12.40" fill="#cfd1d0" text-anchor="start" opacity="1" textLength="44.6" lengthAdjust="spacingAndGlyphs" filter="url(#tb)" stroke="#cfd1d0" stroke-width="0.75">Textured</text>
<text transform="matrix(-1.4907 1.1055 -3.0467 -0.4337 430.16 485.16)" font-family="Liberation Sans, sans-serif" font-weight="bold" font-size="12.40" fill="#cfd1d0" text-anchor="start" opacity="1" textLength="16.2" lengthAdjust="spacingAndGlyphs" filter="url(#tb)" stroke="#cfd1d0" stroke-width="0.75">PEI</text>
<text transform="matrix(-1.5345 1.1380 -3.0820 -0.4468 403.24 505.13)" font-family="Liberation Sans, sans-serif" font-weight="bold" font-size="12.40" fill="#cfd1d0" text-anchor="start" opacity="1" textLength="19.4" lengthAdjust="spacingAndGlyphs" filter="url(#tb)" stroke="#cfd1d0" stroke-width="0.75">Plate</text>
<text transform="matrix(3.6701 0.6322 -1.7771 1.5959 446.06 759.65)" font-family="Liberation Sans, sans-serif" font-weight="normal" font-size="4.60" fill="#a9abaa" text-anchor="start" opacity="1" textLength="37" lengthAdjust="spacingAndGlyphs">PLA ABS PETG</text>
<text transform="matrix(3.8974 0.6693 -1.5370 1.6873 737.82 804.83)" font-family="Liberation Sans, sans-serif" font-weight="normal" font-size="2.60" fill="#b2b4b3" text-anchor="start" opacity="1" >HOT</text>
<text transform="matrix(3.9004 0.6722 -1.5525 1.6944 725.54 808.39)" font-family="Liberation Sans, sans-serif" font-weight="normal" font-size="2.60" fill="#b2b4b3" text-anchor="start" opacity="1" textLength="16" lengthAdjust="spacingAndGlyphs">SURFACE</text>
<polygon points="682.7,801.2 713.7,806.5 705.7,795.8" fill="none" stroke="#b8bab9" stroke-width="0.8"/>
<polygon points="391.7,750.7 410.6,753.9 418.5,747.0 399.7,743.8" fill="#3a3c3b"/>
<polygon points="418.3,755.2 437.3,758.5 445.1,751.5 426.1,748.3" fill="#3a3c3b"/>
<polygon points="397.3,749.9 408.2,751.8 412.9,747.7 402.0,745.8" fill="#c9cbca"/>
<polygon points="423.9,754.5 434.9,756.4 439.5,752.3 428.5,750.4" fill="#c9cbca"/>
<polygon points="850.8,823.4 867.6,826.3 869.3,824.2 852.5,821.4" fill="#c9cbca" />
<polygon points="851.2,826.3 863.2,828.3 864.6,826.6 852.6,824.5" fill="#c9cbca" />
<polygon points="850.5,828.7 860.1,830.4 861.4,828.8 851.8,827.2" fill="#c9cbca" />
<polygon points="850.5,830.9 856.9,832.0 857.9,830.8 851.5,829.7" fill="#c9cbca" />
<polygon points="898.9,831.7 915.9,834.6 917.5,832.5 900.6,829.6" fill="#c9cbca" />
<polygon points="899.4,834.6 911.5,836.6 912.9,834.9 900.8,832.8" fill="#c9cbca" />
<polygon points="898.8,837.0 908.5,838.7 909.7,837.1 900.0,835.5" fill="#c9cbca" />
<polygon points="898.8,839.3 905.3,840.4 906.3,839.1 899.8,838.0" fill="#c9cbca" />
<polygon points="867.7,833.5 887.8,837.0 894.3,828.9 874.2,825.5" fill="none" stroke="#c9cbca" stroke-width="1.4"/>
<text transform="matrix(4.1509 0.7048 -1.2153 1.7748 1091.08 846.66)" font-family="Liberation Sans, sans-serif" font-weight="bold" font-size="12.20" fill="#00ae42" text-anchor="start" opacity="1" textLength="12.6" lengthAdjust="spacingAndGlyphs" stroke="#00ae42" stroke-width="0.3">01</text>
<g filter="url(#tb)"><path d="M557.3,376.3L575,371.6Q586,369.8 589.6,371.2Q588,373.4 578,374.6Z" fill="#8fe0b0" stroke="#2fb56e" stroke-width="1.5" stroke-linejoin="round"/><path d="M557.3,376.3L584.4,379.2" stroke="#2fb56e" stroke-width="1.5" fill="none"/></g>
<polygon points="1317.6,510.4 1317.7,511.4 1319.3,512.3 1321.8,512.9 1362.5,518.3 1365.4,518.4 1367.9,518.0 1369.2,517.2 1377.4,504.5 1377.3,503.5 1375.7,502.6 1373.1,502.0 1332.9,496.7 1330.0,496.6 1327.6,497.0 1326.3,497.8" fill="#ededed" stroke="#999999" stroke-width="2.1" stroke-linejoin="round"/>
<polyline points="1330.7,510.3 1364.4,504.5" fill="none" stroke="#777" stroke-width="2.3400000000000003" stroke-linejoin="round" stroke-linecap="round"/>
<polyline points="1337.1,501.0 1358.2,514.0" fill="none" stroke="#777" stroke-width="2.3400000000000003" stroke-linejoin="round" stroke-linecap="round"/>
<polygon points="1300.7,535.0 1300.8,536.0 1302.3,537.0 1305.0,537.7 1346.2,543.2 1349.2,543.4 1351.7,542.9 1353.1,542.1 1361.6,528.9 1361.5,527.9 1359.9,526.9 1357.3,526.3 1316.4,520.9 1313.5,520.7 1311.0,521.2 1309.6,522.0" fill="#ededed" stroke="#999999" stroke-width="2.1" stroke-linejoin="round"/>
<polyline points="1310.2,535.0 1345.1,539.7" fill="none" stroke="#8f8f8f" stroke-width="2.6" stroke-linejoin="round" stroke-linecap="round"/>
<polygon points="1325.8,534.5 1345.4,536.3 1352.7,529.8 1334.9,526.4" fill="none" stroke="#8f8f8f" stroke-width="1.6900000000000002" stroke-linejoin="round" stroke-linecap="round"/>
<polyline points="1313.1,529.0 1328.8,528.1" fill="none" stroke="#8f8f8f" stroke-width="1.6900000000000002" stroke-linejoin="round" stroke-linecap="round"/>
<polyline points="1313.1,529.0 1319.8,530.3" fill="none" stroke="#8f8f8f" stroke-width="1.6900000000000002" stroke-linejoin="round" stroke-linecap="round"/>
<polygon points="1283.2,560.5 1283.2,561.6 1284.8,562.6 1287.5,563.3 1329.4,569.0 1332.5,569.2 1335.0,568.7 1336.4,567.8 1345.3,554.2 1345.1,553.1 1343.5,552.1 1340.9,551.5 1299.4,545.8 1296.4,545.7 1293.8,546.2 1292.4,547.0" fill="#ededed" stroke="#999999" stroke-width="2.1" stroke-linejoin="round"/>
<polygon points="1298.9,553.2 1332.1,557.8 1334.4,554.3 1301.3,549.8" fill="none" stroke="#8f8f8f" stroke-width="1.6900000000000002" stroke-linejoin="round" stroke-linecap="round"/>
<polygon points="1294.1,560.4 1304.7,561.8 1308.0,556.9 1297.4,555.4" fill="none" stroke="#8f8f8f" stroke-width="1.6900000000000002" stroke-linejoin="round" stroke-linecap="round"/>
<polygon points="1314.1,558.3 1330.4,560.5 1330.7,560.0 1314.4,557.8" fill="none" stroke="#8f8f8f" stroke-width="1.56" stroke-linejoin="round" stroke-linecap="round"/>
<polygon points="1311.1,562.7 1327.4,565.0 1329.1,562.5 1312.7,560.2" fill="none" stroke="#8f8f8f" stroke-width="1.56" stroke-linejoin="round" stroke-linecap="round"/>
<polygon points="1265.0,586.9 1265.1,588.1 1266.6,589.1 1269.3,589.8 1312.0,595.8 1315.1,595.9 1317.7,595.5 1319.2,594.5 1328.3,580.4 1328.2,579.3 1326.6,578.3 1323.9,577.6 1281.7,571.7 1278.6,571.6 1276.1,572.1 1274.6,573.0" fill="#ededed" stroke="#999999" stroke-width="2.1" stroke-linejoin="round"/>
<polygon points="1281.3,587.3 1305.1,590.6 1308.7,585.2 1284.9,581.9" fill="#666" stroke="#666" stroke-width="1.3" stroke-linejoin="round" stroke-linecap="round"/>
<polyline points="1290.0,582.6 1292.0,579.5 1298.1,578.7 1307.4,580.0 1310.0,582.0 1309.1,583.3" fill="none" stroke="#666" stroke-width="1.9500000000000002" stroke-linejoin="round" stroke-linecap="round"/>
<polygon points="1246.1,614.4 1246.2,615.5 1247.8,616.6 1250.5,617.3 1293.9,623.6 1297.0,623.7 1299.7,623.2 1301.2,622.3 1310.7,607.6 1310.6,606.5 1308.9,605.4 1306.2,604.7 1263.3,598.6 1260.2,598.5 1257.6,598.9 1256.1,599.9" fill="#ededed" stroke="#999999" stroke-width="2.1" stroke-linejoin="round"/>
<polygon points="1298.3,613.8 1292.0,606.9 1272.3,604.1 1258.8,608.2 1264.9,615.1 1284.7,617.9" fill="none" stroke="#8f8f8f" stroke-width="1.9500000000000002" stroke-linejoin="round" stroke-linecap="round"/>
<polygon points="1286.9,612.2 1286.8,610.5 1284.4,608.9 1280.5,607.9 1276.0,607.7 1272.2,608.4 1270.1,609.8 1270.2,611.5 1272.5,613.0 1276.4,614.0 1280.9,614.2 1284.8,613.5" fill="none" stroke="#8f8f8f" stroke-width="1.9500000000000002" stroke-linejoin="round" stroke-linecap="round"/>
</g>
</svg>
<div style="position:absolute;left:0;top:0;width:4px;height:950px;background:#cdcdcd"></div>
<div style="position:absolute;left:0;top:948px;width:1476px;height:1px;background:#dcd6d6"></div>
<div style="position:absolute;left:0;top:949px;width:1476px;height:1px;background:#8c8c8c"></div>
<div style="position:absolute;left:150px;top:949px;width:1326px;height:1px;background:#4a3c3c"></div>
<div style="position:absolute;left:4px;top:0;width:20px;height:19px;background:#fbfbfb"></div>
<svg width="1476" height="950" viewBox="0 0 1476 950" style="position:absolute;left:0;top:0" font-family="Liberation Sans, sans-serif">
<path d="M11.6,5.4L8.2,9.2L11.6,13" fill="none" stroke="#3a3a3a" stroke-width="1.3"/><path d="M16.4,5.4L19.8,9.2L16.4,13" fill="none" stroke="#3a3a3a" stroke-width="1.3"/><path d="M14,4.2V13.8" stroke="#8a8a8a" stroke-width="1.9"/>
<rect x="249" y="0" width="1023" height="49" fill="#fafafa"/>
<g fill="none" stroke="#3c3c3c" stroke-width="1.25" stroke-linejoin="round">
<rect x="255.8" y="17.3" width="21" height="20.3"/><path d="M255.8,17.3L265.5,7.5H286.6L276.8,17.3M286.6,7.5V23" />
<path d="M256,17.3H277L286.4,7.8" stroke-width="2.2"/>
<circle cx="286" cy="30.4" r="7.3" fill="#fafafa"/><path d="M281.3,30.4H290.7M286,25.7V35.1"/>
</g>
<g fill="none" stroke="#3c3c3c" stroke-width="1.15" stroke-linejoin="round">
<path d="M301.6,8.2V36.6M301.6,8.2H330.4M307.4,8.2V36.6M301.6,13.9H330.4M313.1,8.2V36.6M301.6,19.6H330.4M318.9,8.2V36.6M301.6,25.2H330.4M324.6,8.2V36.6M301.6,30.9H330.4M330.4,8.2V36.6M301.6,36.6H330.4"/>
<circle cx="328" cy="32.3" r="7.3" fill="#fafafa"/><path d="M323.3,32.3H332.7M328,27.6V37"/>
</g>
<g fill="none" stroke="#3c3c3c" stroke-width="1.15" stroke-linejoin="round">
<polygon points="362,8.5 379.8,13.6 375,31.4 357,26.1"/><rect x="349.4" y="36.4" width="29.6" height="3.2" rx="1.6"/>
<path d="M355.6,22L349,27.8"/><polygon points="346.8,25.4 353.2,28.4 349,33"/>
</g>
<text x="345.6" y="18.2" font-size="7.6" font-weight="bold" fill="#3c3c3c" textLength="13.2" lengthAdjust="spacingAndGlyphs">AUTO</text>
<g fill="none" stroke="#3c3c3c" stroke-width="1.15" stroke-linejoin="round">
<rect x="390.4" y="8.2" width="31.6" height="31.4"/>
<rect x="394.4" y="11.2" width="24.2" height="8.8" stroke-width="1.4"/><rect x="394.4" y="22.6" width="7" height="13.2" stroke-width="1.6"/><rect x="404" y="22.6" width="14.6" height="5.4" stroke-width="1.6"/><rect x="404" y="30.6" width="14.6" height="5.2" stroke-width="1.6"/>
</g>
<g fill="none" stroke="#cdcdcd" stroke-width="1.3" stroke-linejoin="round">
<path d="M436.6,12H464.2M436.6,16.2H464.2" stroke-width="1.6"/><rect x="436.6" y="19.6" width="27.6" height="3.6" rx="1.6"/><rect x="436.6" y="25.6" width="27.6" height="4" rx="1.6"/><rect x="436.6" y="32.2" width="27.6" height="5" rx="1.8"/>
</g>
<path d="M482.5,8V39.6M1209.7,8V39.6" stroke="#9c9c9c" stroke-width="1.4"/>
<g fill="none" stroke="#cdcdcd" stroke-width="1.2" stroke-linejoin="round">
<path transform="rotate(0 518.4 23.9)" d="M518.4,6.9l-5.6,6.2h3.4v4.2h4.4v-4.2h3.4z"/>
<path transform="rotate(90 518.4 23.9)" d="M518.4,6.9l-5.6,6.2h3.4v4.2h4.4v-4.2h3.4z"/>
<path transform="rotate(180 518.4 23.9)" d="M518.4,6.9l-5.6,6.2h3.4v4.2h4.4v-4.2h3.4z"/>
<path transform="rotate(270 518.4 23.9)" d="M518.4,6.9l-5.6,6.2h3.4v4.2h4.4v-4.2h3.4z"/>
<rect x="516.4" y="21.9" width="4" height="4"/>
</g>
<g fill="none" stroke="#cdcdcd" stroke-width="1.2" stroke-linejoin="round">
<polygon points="562,16.8 573.8,28.6 562,40.4 550.2,28.6"/>
<path d="M547.4,29.5A15,15 0 0 1 571.5,13.2"/><polygon points="575.6,10.6 578.4,20 569.2,17.4"/>
</g>
<g fill="none" stroke="#cdcdcd" stroke-width="1.2" stroke-linejoin="round">
<rect x="590.4" y="8.2" width="31.6" height="31.4" stroke-dasharray="2.6 2.6"/><rect x="590.4" y="22.4" width="17.6" height="17.2" fill="#fafafa"/>
<polygon points="608.8,20 610.1,21.7 615.2,16.6 617.6,19.6 617.8,12.7 610.8,13 613.7,15.2"/>
</g>
<g fill="none" stroke="#cdcdcd" stroke-width="1.2" stroke-linejoin="round">
<polygon points="649.8,8.5 667.7,13.6 663.4,31.4 645.5,26.6"/><rect x="637.4" y="36.4" width="29.4" height="3.2" rx="1.6"/>
<path d="M643.4,21.8L636.6,28"/><polygon points="634.6,25.8 642.2,27.6 636.8,33"/>
</g>
<g fill="none" stroke="#cdcdcd" stroke-width="1.2" stroke-linejoin="round">
<rect x="680.2" y="8.2" width="28.6" height="13.2"/><rect x="680.2" y="25.6" width="28.6" height="14"/><path d="M680.2,23.4H708.8" stroke-dasharray="1.4 1.6"/>
</g>
<defs><pattern id="hat" width="2.6" height="2.6" patternUnits="userSpaceOnUse" patternTransform="rotate(-55)"><rect width="2.6" height="2.6" fill="#fafafa"/><path d="M0,1.3H2.6" stroke="#cfcfcf" stroke-width="1.1"/></pattern></defs>
<g fill="none" stroke="#cdcdcd" stroke-width="1.2" stroke-linejoin="round">
<rect x="732.2" y="8.2" width="22.8" height="23.2"/><rect x="722.2" y="16.4" width="22.6" height="23.2"/><rect x="732.2" y="16.4" width="12.6" height="15" fill="url(#hat)"/>
</g>
<g fill="none" stroke="#cdcdcd" stroke-width="1.2" stroke-linejoin="round">
<rect x="769.4" y="29.4" width="29.6" height="9.2"/><path d="M776.6,29.4V21.8H791.6V29.4" stroke-dasharray="1.4 1.4"/><polygon points="780.9,9.2 794.7,15.2 791.8,20.6 778.4,14.6"/>
<path d="M776.2,16L769.2,23"/><polygon points="766.8,20 774.4,22.2 769,27.2"/>
</g>
<g fill="none" stroke="#cdcdcd" stroke-width="1.2" stroke-linejoin="round">
<polygon points="824.8,8.8 838.3,22.8 822.6,38.5 809,24.4"/><path d="M810,22.8H838.3"/><path d="M813,7.8L824.2,19" stroke-width="3"/>
<path d="M838.9,26.6C836,31 834.4,34 834.4,36.2A4.5,4.5 0 0 0 843.4,36.2C843.4,34 841.8,31 838.9,26.6Z"/>
</g>
<text x="853" y="38.3" font-size="43" font-weight="bold" fill="#fafafa" stroke="#3c3c3c" stroke-width="1.3" textLength="26" lengthAdjust="spacingAndGlyphs">T</text>
<text x="872.8" y="38.8" font-size="25" font-weight="bold" fill="#fafafa" stroke="#3c3c3c" stroke-width="1.2" textLength="12.6" lengthAdjust="spacingAndGlyphs">a</text>
<g fill="none" stroke="#cdcdcd" stroke-width="1.2" stroke-linejoin="round">
<polygon points="898.5,8.2 929.6,8.2 929.6,39.6 915.5,39.6 915.5,21.1 898.5,21.1"/><rect x="900.4" y="21.1" width="11.2" height="18.5" fill="url(#hat)"/>
</g>
<g fill="none" stroke="#cdcdcd" stroke-width="1.2" stroke-linejoin="round">
<rect x="942.4" y="18.6" width="21.6" height="20.8"/><path d="M942.4,18.6L952.3,8.5H973.5L964,18.6M973.5,8.5V29.3L964,39.4"/><path d="M947.5,20C950,26 952,33 955.5,38" stroke-dasharray="1.2 1.6"/>
</g>
<g fill="none" stroke="#cdcdcd" stroke-width="1.2" stroke-linejoin="round">
<circle cx="991.4" cy="14.1" r="4.8" fill="url(#hat)"/>
<circle cx="1011.4" cy="14.1" r="4.8" fill="url(#hat)"/>
<circle cx="991.4" cy="34.1" r="4.8" fill="url(#hat)"/>
<circle cx="1011.4" cy="34.1" r="4.8" fill="url(#hat)"/>
<rect x="991.4" y="14.1" width="20" height="20" fill="#fafafa"/>
</g>
<g fill="none" stroke="#cdcdcd" stroke-width="1.2" stroke-linejoin="round">
<rect x="1030.8" y="18.6" width="21.2" height="20.8"/><path d="M1030.8,18.6L1041.1,7.6H1061.7L1052,18.6M1061.7,7.6V28.7L1052,39.4"/>
<path d="M1031,22.6q2.6,-2.2 5.3,0t5.3,0t5.3,0t5.3,0"/>
<path d="M1052,22.6L1061.7,12.0"/>
<path d="M1031,27.4q2.6,-2.2 5.3,0t5.3,0t5.3,0t5.3,0"/>
<path d="M1052,27.4L1061.7,16.8"/>
<path d="M1031,32.2q2.6,-2.2 5.3,0t5.3,0t5.3,0t5.3,0"/>
<path d="M1052,32.2L1061.7,21.6"/>
<path d="M1031,37.0q2.6,-2.2 5.3,0t5.3,0t5.3,0t5.3,0"/>
<path d="M1052,37.0L1061.7,26.4"/>
</g>
<g fill="none" stroke="#cdcdcd" stroke-width="1.2" stroke-linejoin="round">
<path d="M1074.5,7.6H1094.0L1097.8,12V35.2H1074.5Z"/>
<path d="M1080.5,12.6H1099.1L1103.5,17.4V40.6H1080.5Z" fill="#fafafa"/>
</g>
<text x="1092.3" y="34.8" font-size="21.6" fill="#fafafa" stroke="#cdcdcd" stroke-width="0.9" text-anchor="middle" textLength="11" lengthAdjust="spacingAndGlyphs">O</text>
<g fill="none" stroke="#cdcdcd" stroke-width="1.2" stroke-linejoin="round">
<path d="M1118.4,7.6H1137.9L1141.7,12V35.2H1118.4Z"/>
<path d="M1124.4,12.6H1143.0L1147.4,17.4V40.6H1124.4Z" fill="#fafafa"/>
</g>
<text x="1136.2" y="34.8" font-size="21.6" fill="#fafafa" stroke="#cdcdcd" stroke-width="0.9" text-anchor="middle" textLength="11" lengthAdjust="spacingAndGlyphs">P</text>
<g fill="none" stroke="#cdcdcd" stroke-width="1.2" stroke-linejoin="round">
<polygon points="1184.4,8.7 1193.7,17.9 1171.4,39.6 1162.2,30.4"/>
<path d="M1165.0,27.7l1.8,1.8M1167.8,25.0l2.5,2.5M1170.5,22.3l1.8,1.8M1173.3,19.5l2.5,2.5M1176.1,16.8l1.8,1.8M1178.9,14.1l2.5,2.5M1181.6,11.4l1.8,1.8"/>
</g>
<g fill="none" stroke="#3c3c3c" stroke-width="1.4" stroke-linejoin="round">
<path d="M1240.5,14.2H1229.5V39.6H1254.9V26.5H1251"/>
<path d="M1229.5,26.4H1233.6C1234,29.4 1238.6,29.4 1239,26.4H1242.2"/>
<path d="M1242.2,39.6V36.2C1245.2,35.6 1245.2,31.2 1242.2,30.4V26.4C1241,25.4 1241,24 1242.6,23.2"/>
<path d="M1240.5,14.2C1242.5,16 1242,18.2 1240.6,18.8C1238.6,20 1240,23.6 1243,22.8C1245,22.2 1246,23.4 1246.4,24.6"/>
<path d="M1252.2,6.4L1261.8,15.2L1252.8,23.4L1249.6,20.4C1250.6,17.6 1248,16 1246,17.4L1243.8,15.2L1246,13C1244.4,10.6 1247,8.4 1249.2,9.6Z" fill="#fafafa"/>
<path d="M1246.4,24.6C1248.4,22.4 1251.6,23.6 1251,26.5"/>
</g>
<polygon points="26.3,861.5 50,840.3 109.9,848.2 109.9,907.5 89.3,926.9 26.3,920.8" fill="#c7c7c7"/>
<polygon points="26.3,861.5 50,840.3 109.9,848.2 89.6,868.6" fill="#c9c9c9"/>
<polygon points="89.6,868.6 109.9,848.2 109.9,907.5 89.3,926.9" fill="#c4c4c4"/>
<path d="M104.2,853.5V913" stroke="#cfcfcf" stroke-width="1"/>
<text transform="matrix(0.99 0.12 -0.02 1 41.6 897.8)" font-size="12.6" fill="#5a5a5a">Front</text>
<text transform="matrix(0.95 0.16 -0.75 0.5 59.5 855.6)" font-size="10" fill="#5a5a5a">Top</text>
<text transform="matrix(0.36 -0.7 0 1 93.8 898.5)" font-size="9.5" fill="#4a4a4a">Right</text>
<path d="M30,917.4L47.5,903.6" stroke="#a4d2a4" stroke-width="2.4"/><polygon points="51.4,900.6 44.4,902 48,906.6" fill="#a4d2a4"/>
<path d="M26.3,920.8V865" stroke="#7a7acd" stroke-width="3"/><polygon points="20.8,866.4 32.2,866.4 26.4,854.6" fill="#7a7acd"/>
<path d="M26.3,920.8L82,928.6" stroke="#cd7272" stroke-width="3"/><polygon points="81.6,923 91.4,930 79.6,934.2" fill="#cd7272"/>
<text x="21.6" y="846.6" font-size="8.6" fill="#7a7acd">Z</text><text x="100" y="936.2" font-size="8.6" fill="#cd7272">X</text>
<circle cx="158.5" cy="917.2" r="17.8" fill="#f7f7f7"/>
<g fill="none" stroke="#5a5a5a" stroke-width="1.6" stroke-linecap="round" stroke-linejoin="round">
<path d="M148.6,911.4V909.2Q148.600,907.6 150.2,907.6H152.6M164.400,907.6H166.800Q168.4,907.6 168.4,909.2V911.4M168.4,922.800V925Q168.4,926.6 166.800,926.6H164.400M152.6,926.6H150.2Q148.600,926.6 148.600,925V922.800"/>
<path d="M158.5,910.6L164,913.8V920.2L158.5,923.4L153,920.2V913.8ZM153,913.8L158.5,917L164,913.8M158.5,917V923.4"/>
</g>
</svg>
<div style="position:absolute;left:1092px;top:864px;width:375px;height:75px;box-sizing:border-box;border:1.5px solid #1fa53a;border-radius:5px;background:#fff;overflow:hidden">
<div style="position:absolute;left:0;top:0;width:7.5px;height:100%;background:#0b9b34"></div>
<svg width="340" height="72" style="position:absolute;left:0;top:0" font-family="Liberation Sans, sans-serif" font-size="12.7" fill="#444444">
<text x="14.1" y="17.2" textLength="254.2" lengthAdjust="spacingAndGlyphs">Processing model 'March Mammal Madness</text>
<text x="14.1" y="32.4" textLength="282.6" lengthAdjust="spacingAndGlyphs">Trophy.stl' with more than 1M triangles could be</text>
<text x="14.1" y="47.6" textLength="309.4" lengthAdjust="spacingAndGlyphs">slow. It is highly recommended to simplify the model.</text>
<text x="14.1" y="62.8" textLength="87.2" lengthAdjust="spacingAndGlyphs" fill="#1fa53a">Simplify model</text>
<path d="M14.1,64.9H101.3" stroke="#1fa53a" stroke-width="1"/>
</svg>
<div style="position:absolute;left:340px;top:5.5px;width:25px;height:25px;border-radius:50%;background:#ececec"></div>
<svg width="25" height="25" style="position:absolute;left:340px;top:5.5px"><path d="M6.2,6.2L18.8,18.8M18.8,6.200L6.2,18.8" stroke="#6a6a6a" stroke-width="1.3" fill="none"/></svg>
<div style="position:absolute;left:354px;top:55.5px;width:11px;height:11px;border-radius:50%;background:#ececec"></div>
<div style="position:absolute;left:356.2px;top:60.4px;width:6.6px;height:1.4px;background:#d2d2d2"></div>
</div>
</body></html>
